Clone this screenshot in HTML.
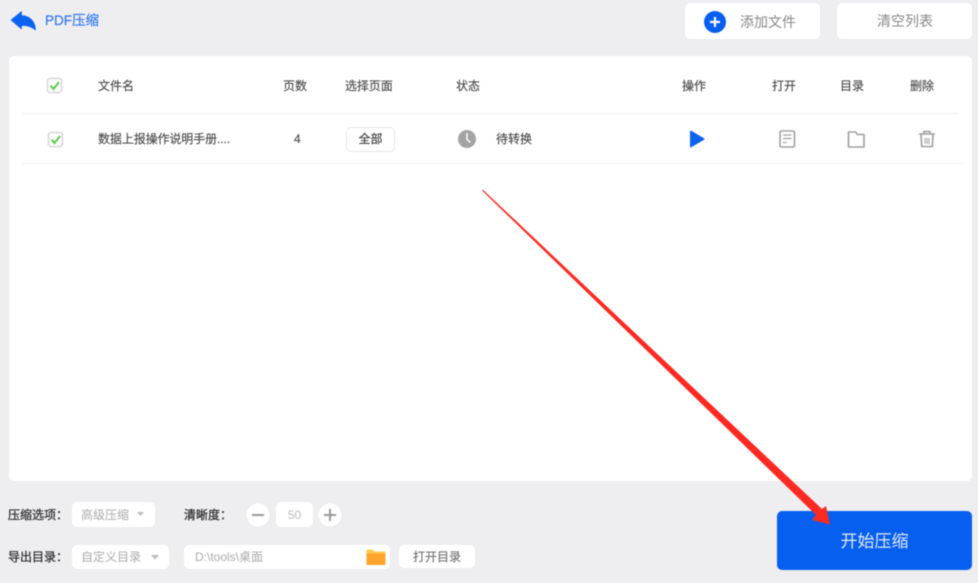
<!DOCTYPE html>
<html lang="zh">
<head>
<meta charset="utf-8">
<style>
html,body{margin:0;padding:0}
body{width:978px;height:583px;overflow:hidden;background:#eeeef1;position:relative;font-family:"Liberation Sans","Noto Sans CJK SC",sans-serif}
#w{position:absolute;left:0;top:0;width:978px;height:583px;filter:blur(.5px)}
.a{position:absolute;white-space:nowrap}
.b{position:absolute;background:#fff;border-radius:5px}
.t{font-size:12px;line-height:16px;color:#4c4c4c;-webkit-text-stroke:.15px #4c4c4c}
.l{font-size:12px;line-height:16px;color:#333;-webkit-text-stroke:.3px #333}
.l span{font-family:"Noto Sans CJK TC",sans-serif}
.c{text-align:center}
svg{position:absolute;left:0;top:0}
</style>
</head>
<body>
<div id="w">
<div class="a" style="left:45px;top:12px;font-size:13.500px;line-height:18px;color:#2f76ee;-webkit-text-stroke:.15px #2f76ee">PDF压缩</div>

<div class="b" style="left:685px;top:3px;width:135px;height:36px"></div>
<div class="b" style="left:837px;top:3px;width:135px;height:36px"></div>
<div class="a" style="left:740px;top:13px;font-size:14px;line-height:18px;color:#888">添加文件</div>
<div class="a" style="left:877px;top:12px;font-size:14px;line-height:18px;color:#888">清空列表</div>

<div class="b" style="left:9px;top:56px;width:963px;height:425px"></div>
<div class="a" style="left:22px;top:113px;width:936px;height:1px;background:#f0f0f2"></div>
<div class="a" style="left:22px;top:163px;width:941px;height:1px;background:#f0f0f2"></div>

<div class="a t" style="left:98px;top:78px">文件名</div>
<div class="a t" style="left:283px;top:78px">页数</div>
<div class="a t" style="left:345px;top:78px;letter-spacing:-.1px">选择页面</div>
<div class="a t" style="left:456px;top:78px">状态</div>
<div class="a t" style="left:682px;top:78px">操作</div>
<div class="a t" style="left:772px;top:78px">打开</div>
<div class="a t" style="left:840px;top:78px">目录</div>
<div class="a t" style="left:910px;top:78px">删除</div>

<div class="a t" style="left:98px;top:131px;letter-spacing:-.1px">数据上报操作说明手册....</div>
<div class="a t" style="left:294px;top:131px">4</div>
<div class="a t c" style="left:346px;top:127px;width:47px;height:23px;line-height:23px;border:1px solid #e6e6e8;border-radius:5px;background:#fff;color:#333">全部</div>
<div class="a t" style="left:496px;top:131px">待转换</div>

<div class="a l" style="left:8px;top:507px">压缩选项<span>：</span></div>
<div class="b" style="left:72px;top:502px;width:83px;height:25px"></div>
<div class="a" style="left:81px;top:507px;font-size:12px;line-height:16px;color:#aaa">高级压缩</div>
<div class="a l" style="left:184px;top:507px">清晰度<span>：</span></div>
<div class="b" style="left:276px;top:502px;width:37px;height:25px"></div>
<div class="a c" style="left:276px;top:507px;width:37px;font-size:12px;line-height:16px;color:#bbb">50</div>

<div class="a l" style="left:8px;top:549px">导出目录<span>：</span></div>
<div class="b" style="left:72px;top:545px;width:97px;height:24px"></div>
<div class="a" style="left:81px;top:549px;font-size:12px;line-height:16px;color:#aaa">自定义目录</div>
<div class="b" style="left:184px;top:545px;width:206px;height:24px"></div>
<div class="a" style="left:195px;top:549px;font-size:12px;line-height:16px;color:#aaa">D:\tools\桌面</div>
<div class="b" style="left:399px;top:545px;width:76px;height:23px"></div>
<div class="a c" style="left:399px;top:549px;width:76px;font-size:12px;line-height:16px;color:#777;-webkit-text-stroke:.2px #777">打开目录</div>

<div class="b" style="left:777px;top:511px;width:195px;height:59px;background:#075ff0"></div>
<div class="a c" style="left:777px;top:531px;width:195px;font-size:17px;line-height:22px;color:#dfe9fd">开始压缩</div>

<svg width="978" height="583" viewBox="0 0 978 583">
  <!-- back arrow -->
  <path d="M11 20 L21.500 11.500 L21.500 15.500 C30 15.500 35.500 22 35.500 30 C32 27 28 25.500 21.500 25.500 L21.500 29 Z" fill="#0b63f0" stroke="#0b63f0" stroke-width=".6" stroke-linejoin="round"/>
  <!-- plus -->
  <circle cx="715" cy="22" r="11" fill="#075ff0"/>
  <path d="M710 22h10M715 17v10" stroke="#fff" stroke-width="2.200"/>
  <!-- checkboxes -->
  <rect x="47.500" y="78.500" width="14" height="14" rx="2.500" fill="#fff" stroke="#d6d6d6" stroke-width="1.500"/>
  <path d="M50.500 85.500l3 3.500 5.500-7" fill="none" stroke="#5ccb4b" stroke-width="2"/>
  <rect x="48.500" y="132.500" width="14" height="14" rx="2.500" fill="#fff" stroke="#d6d6d6" stroke-width="1.500"/>
  <path d="M51.500 139.500l3 3.500 5.500-7" fill="none" stroke="#5ccb4b" stroke-width="2"/>
  <!-- clock -->
  <circle cx="467" cy="139" r="9" fill="#a3a3a3"/>
  <path d="M467 133v6.500l3.500 3" fill="none" stroke="#fff" stroke-width="1.400"/>
  <!-- play -->
  <path d="M690 131.500 L690 146.500 Q690 147.800 691.200 147.200 L704 139.800 Q705 139 704 138.200 L691.200 130.800 Q690 130.200 690 131.500Z" fill="#0b63f0"/>
  <!-- document -->
  <rect x="780" y="131" width="14.500" height="16" rx="1.500" fill="none" stroke="#a0a0a0" stroke-width="1.600"/>
  <path d="M783 135h8.500M783 138.500h8.500M783 142.500h3.500" stroke="#a0a0a0" stroke-width="1.300"/>
  <!-- folder -->
  <path d="M848.500 147V132h7l2 2.500h6.500V147Z" fill="none" stroke="#a0a0a0" stroke-width="1.600" stroke-linejoin="round"/>
  <!-- trash -->
  <path d="M919 134h16M924 134v-2.500h6v2.500M921 134.500l.7 12h10.600l.7-12" fill="none" stroke="#a0a0a0" stroke-width="1.600"/>
  <path d="M925 138v6M927 138v6M929 138v6" stroke="#a0a0a0" stroke-width="1"/>
  <!-- select carets -->
  <path d="M137 512h7l-3.500 4Z" fill="#bbb"/>
  <path d="M151 555h8l-4 4.500Z" fill="#bbb"/>
  <!-- minus plus -->
  <circle cx="258" cy="515" r="11.500" fill="#fff"/>
  <path d="M252 515h12" stroke="#999" stroke-width="2"/>
  <circle cx="330" cy="515" r="11.500" fill="#fff"/>
  <path d="M324 515h12M330 509v12" stroke="#999" stroke-width="2"/>
  <!-- yellow folder -->
  <path d="M366.500 550.500q0-1 1-1h5l2 2h10q1 0 1 1v1.500h-19Z" fill="#ffc94f"/>
  <path d="M366.500 553.500h19v10.500q0 1-1 1h-17q-1 0-1-1Z" fill="#ffa52c"/>
  <!-- red arrow -->
  <path d="M482 190.500 L483 189.800 L822 509 L826 506 L830 524.500 L812 520 L816 515 Z" fill="#fb2a22"/>
</svg>
</div>
</body>
</html>
